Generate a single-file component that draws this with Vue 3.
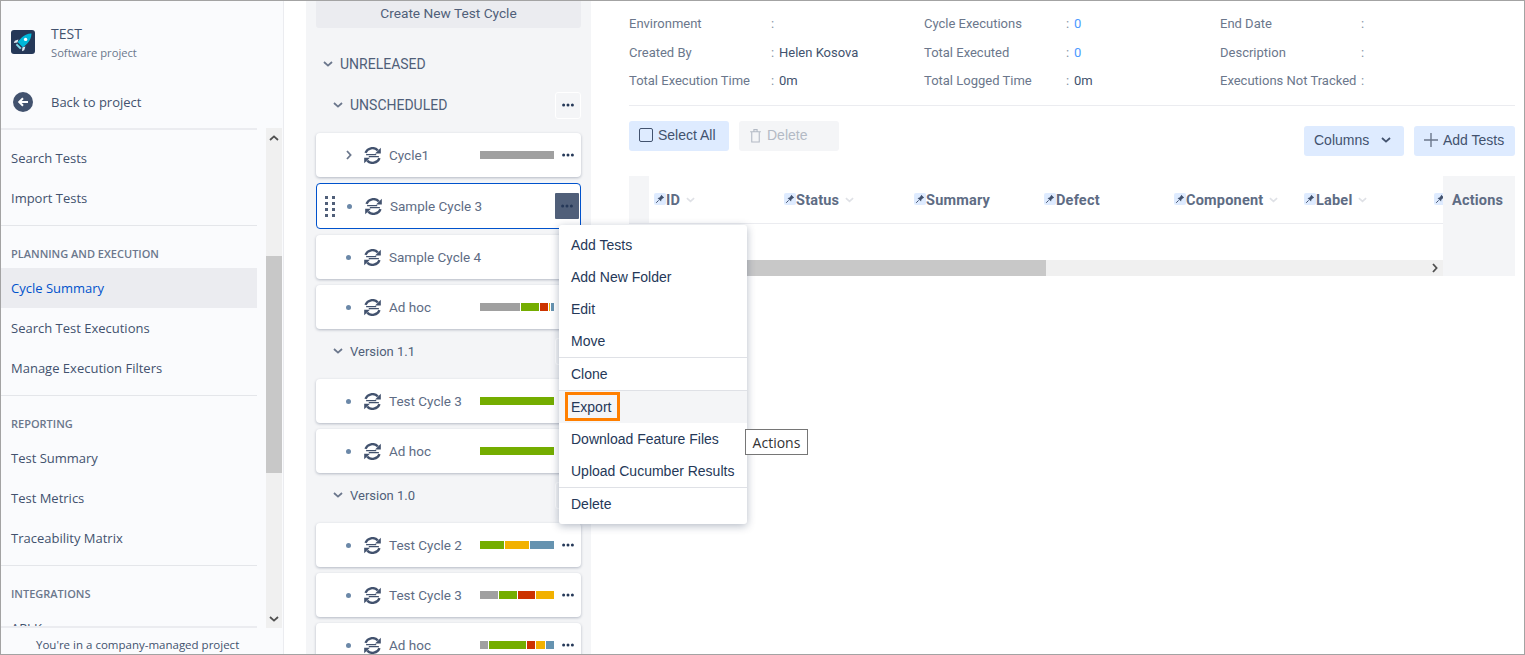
<script setup>
const gray = "#a0a0a0";
const green = "#74ad00";
const red = "#cc3300";
const amber = "#f2b100";
const blue = "#6693b0";

const navGroups = [
  { items: ["Search Tests", "Import Tests"] },
  {
    title: "PLANNING AND EXECUTION",
    items: ["Cycle Summary", "Search Test Executions", "Manage Execution Filters"],
  },
  { title: "REPORTING", items: ["Test Summary", "Test Metrics", "Traceability Matrix"] },
  { title: "INTEGRATIONS", items: ["API K"] },
];

const treeRows = [
  { type: "head", label: "UNSCHEDULED", caps: true },
  { type: "card", label: "Cycle1", expand: true, bar: [{ c: gray, w: 74 }] },
  { type: "card", label: "Sample Cycle 3", selected: true, bar: [] },
  { type: "card", label: "Sample Cycle 4", bar: [] },
  {
    type: "card",
    label: "Ad hoc",
    bar: [
      { c: gray, w: 40 },
      { c: green, w: 18 },
      { c: red, w: 8 },
      { c: amber, w: 1 },
      { c: blue, w: 3 },
    ],
  },
  { type: "head", label: "Version 1.1" },
  { type: "card", label: "Test Cycle 3", bar: [{ c: green, w: 74 }] },
  { type: "card", label: "Ad hoc", bar: [{ c: green, w: 74 }] },
  { type: "head", label: "Version 1.0" },
  {
    type: "card",
    label: "Test Cycle 2",
    bar: [
      { c: green, w: 24 },
      { c: amber, w: 24 },
      { c: blue, w: 24 },
    ],
  },
  {
    type: "card",
    label: "Test Cycle 3",
    bar: [
      { c: gray, w: 18 },
      { c: green, w: 18 },
      { c: red, w: 17 },
      { c: amber, w: 18 },
    ],
  },
  {
    type: "card",
    label: "Ad hoc",
    bar: [
      { c: gray, w: 8 },
      { c: green, w: 37 },
      { c: red, w: 8 },
      { c: amber, w: 9 },
      { c: blue, w: 8 },
    ],
  },
];

const info = [
  { label: "Environment", value: "" },
  { label: "Cycle Executions", value: "0", link: true },
  { label: "End Date", value: "" },
  { label: "Created By", value: "Helen Kosova" },
  { label: "Total Executed", value: "0", link: true },
  { label: "Description", value: "" },
  { label: "Total Execution Time", value: "0m" },
  { label: "Total Logged Time", value: "0m" },
  { label: "Executions Not Tracked", value: "" },
];

const columns = [
  { name: "ID", sort: true },
  { name: "Status", sort: true },
  { name: "Summary" },
  { name: "Defect" },
  { name: "Component", sort: true },
  { name: "Label", sort: true },
  { name: "" },
];

const menu = [
  { label: "Add Tests" },
  { label: "Add New Folder" },
  { label: "Edit" },
  { label: "Move", sep: true },
  { label: "Clone", sep: true },
  { label: "Export", active: true },
  { label: "Download Feature Files" },
  { label: "Upload Cucumber Results", sep: true },
  { label: "Delete" },
];
</script>

<template>
  <div class="page">
    <svg class="defs" width="0" height="0">
      <symbol id="sync" viewBox="0 0 16 16">
        <path d="M1.4 5.6A7 7 0 0 1 13 3.2" fill="none" stroke="currentColor" stroke-width="2.2" />
        <path d="M10.4 6h5.4V.8z" fill="currentColor" />
        <path d="M14.6 10.4A7 7 0 0 1 3 12.8" fill="none" stroke="currentColor" stroke-width="2.2" />
        <path d="M5.6 10H.2v5.2z" fill="currentColor" />
        <path d="M2 7.1h9.5M4.5 9.1H14" stroke="currentColor" stroke-width="1.2" />
      </symbol>
      <symbol id="more" viewBox="0 0 12 4">
        <circle cx="1.6" cy="2" r="1.5" fill="currentColor" />
        <circle cx="6" cy="2" r="1.5" fill="currentColor" />
        <circle cx="10.4" cy="2" r="1.5" fill="currentColor" />
      </symbol>
      <symbol id="chev" viewBox="0 0 10 6">
        <path d="M1 1l4 3.6L9 1" fill="none" stroke="currentColor" stroke-width="1.8" />
      </symbol>
      <symbol id="pin" viewBox="0 0 12 12">
        <path d="M7.2 1.8l3 3-1.3.4-1.6 1.6-.2 1.7-3.6-3.6 1.7-.2 1.6-1.6z" fill="#42526e" />
        <path d="M4.6 7.4L2.2 9.8" stroke="#42526e" stroke-width="1" />
      </symbol>
    </svg>

    <aside class="sidebar">
      <div class="side-head">
        <div class="project">
          <svg class="logo" viewBox="0 0 24 24">
            <rect width="24" height="24" rx="3" fill="#253858" />
            <path d="M20.5 3.5c-4.2.2-7.4 1.6-9.8 4L6.6 12l5.4 5.4 4.5-4.1c2.4-2.4 3.8-5.6 4-9.8z" fill="#00b8d9" />
            <path d="M7.4 9.6l-3.6 1.2-1 2.2 3.6-.4zM14.4 16.6l-1.2 3.6-2.2 1 .4-3.6z" fill="#dfe9f2" />
            <path d="M6 13.4l4.6 4.6-1.6 1.2-4.2-4.2z" fill="#7fdcec" />
            <circle cx="14.6" cy="9.4" r="1.7" fill="#fff" />
          </svg>
          <div>
            <div class="project-name">TEST</div>
            <div class="project-type">Software project</div>
          </div>
        </div>
        <div class="back">
          <svg class="back-icon" viewBox="0 0 20 20">
            <circle cx="10" cy="10" r="10" fill="#42526e" />
            <path d="M15 10H6.5M10 6.2L6.2 10l3.8 3.8" fill="none" stroke="#fff" stroke-width="2" />
          </svg>
          <span>Back to project</span>
        </div>
      </div>

      <div class="side-body">
        <div class="nav-col">
          <nav class="nav">
            <div v-for="(group, g) in navGroups" :key="g" class="nav-group">
              <div v-if="group.title" class="nav-title">{{ group.title }}</div>
              <div
                v-for="item in group.items"
                :key="item"
                class="nav-item"
                :class="{ current: item === 'Cycle Summary' }"
              >
                {{ item }}
              </div>
            </div>
          </nav>
        </div>
        <div class="scrollbar">
          <svg class="sb-arrow" viewBox="0 0 10 6"><path d="M1 5l4-3.6L9 5" fill="none" stroke="#505050" stroke-width="1.8" /></svg>
          <div class="sb-thumb"></div>
          <svg class="sb-arrow sb-down" viewBox="0 0 10 6"><path d="M1 1l4 3.6L9 1" fill="none" stroke="#505050" stroke-width="1.8" /></svg>
        </div>
      </div>
      <div class="side-foot">You're in a company-managed project</div>
    </aside>

    <section class="tree">
      <div class="create">Create New Test Cycle</div>
      <div class="release">
        <svg class="chev"><use href="#chev" /></svg>
        <span>UNRELEASED</span>
      </div>

      <template v-for="(row, i) in treeRows" :key="i">
        <div v-if="row.type === 'head'" class="version">
          <svg class="chev"><use href="#chev" /></svg>
          <span class="version-name" :class="{ caps: row.caps }">{{ row.label }}</span>
          <button class="version-more"><svg class="dots"><use href="#more" /></svg></button>
        </div>
        <div v-else class="card" :class="{ selected: row.selected }">
          <div v-if="row.selected" class="grip">
            <i v-for="n in 8" :key="n"></i>
          </div>
          <div class="slot">
            <svg v-if="row.expand" class="expand" viewBox="0 0 6 10">
              <path d="M1 1l3.6 4L1 9" fill="none" stroke="#6b778c" stroke-width="1.8" />
            </svg>
            <span v-else class="bullet"></span>
          </div>
          <svg class="sync"><use href="#sync" /></svg>
          <span class="card-name">{{ row.label }}</span>
          <div v-if="row.bar.length" class="bar">
            <span
              v-for="(seg, s) in row.bar"
              :key="s"
              :style="{ width: seg.w + 'px', background: seg.c }"
            ></span>
          </div>
          <button class="card-more"><svg class="dots"><use href="#more" /></svg></button>
        </div>
      </template>
    </section>

    <main class="main">
      <div class="info">
        <template v-for="cell in info" :key="cell.label">
          <span class="info-label">{{ cell.label }}</span>
          <span class="info-colon">:</span>
          <span class="info-value" :class="{ link: cell.link }">{{ cell.value }}</span>
        </template>
      </div>

      <div class="actions">
        <div class="actions-left">
          <button class="btn">
            <span class="check"></span>
            Select All
          </button>
          <button class="btn btn-off">
            <svg class="trash" viewBox="0 0 12 14">
              <path d="M1 3.5h10M4.5 3.5V1.5h3v2M2.5 3.5v9.5h7V3.5" fill="none" stroke="currentColor" stroke-width="1" />
            </svg>
            Delete
          </button>
        </div>
        <div class="actions-right">
          <button class="btn btn-columns">
            Columns
            <svg class="btn-chev"><use href="#chev" /></svg>
          </button>
          <button class="btn btn-add">
            <svg class="plus" viewBox="0 0 14 14"><path d="M7 0v14M0 7h14" stroke="#6b778c" stroke-width="1.4" /></svg>
            Add Tests
          </button>
        </div>
      </div>

      <div class="table">
        <div class="thead">
          <div class="gutter"></div>
          <div class="cols">
            <div v-for="(col, c) in columns" :key="c" class="col">
              <svg class="pin"><use href="#pin" /></svg>
              <span class="col-name">{{ col.name }}</span>
              <svg v-if="col.sort" class="col-chev"><use href="#chev" /></svg>
            </div>
          </div>
        </div>
        <div class="tbody"></div>
        <div class="hbar">
          <div class="hbar-thumb"></div>
          <svg class="hbar-arrow" viewBox="0 0 6 10">
            <path d="M1 1l3.6 4L1 9" fill="none" stroke="#505050" stroke-width="1.8" />
          </svg>
        </div>
        <div class="actions-col">Actions</div>
      </div>
    </main>

    <ul class="menu">
      <li
        v-for="item in menu"
        :key="item.label"
        :class="{ active: item.active, sep: item.sep }"
      >
        {{ item.label }}
      </li>
    </ul>
    <div class="highlight"></div>
    <div class="tooltip">Actions</div>
  </div>
</template>

<style>
html,
body {
  margin: 0;
  overflow: hidden;
  background: #fff;
}
</style>

<style scoped>
.page {
  position: relative;
  display: flex;
  box-sizing: border-box;
  width: 1525px;
  height: 655px;
  border: 1px solid #a3a3a3;
  overflow: hidden;
  background: #fff;
  color: #42526e;
}
.defs {
  position: absolute;
}
button {
  border: 0;
  padding: 0;
  background: none;
  color: inherit;
  font: inherit;
}

/* sidebar */
.sidebar {
  flex: none;
  display: flex;
  flex-direction: column;
  box-sizing: border-box;
  width: 283px;
  background: #fafbfd;
  border-right: 1px solid #ebecf0;
  font: 13px "Open Sans", sans-serif;
}
.side-head {
  height: 127px;
  padding-top: 23px;
  box-sizing: border-box;
}
.project {
  display: flex;
  align-items: center;
  gap: 16px;
  height: 38px;
  padding-left: 10px;
}
.logo {
  width: 24px;
  height: 24px;
  margin-top: -2px;
}
.project-name {
  font-size: 14px;
  line-height: 20px;
  color: #42526e;
}
.project-type {
  font-size: 11.2px;
  line-height: 18px;
  color: #6b778c;
}
.back {
  display: flex;
  align-items: center;
  height: 36px;
  margin-top: 22px;
  padding-left: 12px;
  gap: 18px;
}
.back-icon {
  width: 20px;
  height: 20px;
}
.side-body {
  display: flex;
  height: 500px;
}
.nav-col {
  width: 256px;
  box-sizing: border-box;
  border-top: 2px solid #ebecf0;
  border-bottom: 2px solid #ebecf0;
  overflow: hidden;
}
.nav {
  padding-top: 8px;
}
.nav-group {
  padding-bottom: 7px;
  border-bottom: 1px solid #e4e6ea;
}
.nav-title {
  padding: 20px 10px 6px;
  font-size: 11px;
  font-weight: 600;
  line-height: 16px;
  color: #6b778c;
}
.nav-item {
  height: 40px;
  padding-left: 10px;
  line-height: 40px;
  white-space: nowrap;
}
.nav-item.current {
  background: #ebecf0;
  color: #0052cc;
}
.scrollbar {
  position: relative;
  display: flex;
  flex-direction: column;
  width: 16px;
  margin-left: 9px;
  background: #f0f0f0;
}
.sb-arrow {
  position: absolute;
  left: 3px;
  top: 7px;
  width: 10px;
  height: 6px;
}
.sb-down {
  top: auto;
  bottom: 6px;
}
.sb-thumb {
  height: 217px;
  margin-top: 128px;
  background: #c8c8c8;
}
.side-foot {
  padding: 9px 0 0 35px;
  font-size: 11.5px;
  line-height: 16px;
  white-space: nowrap;
}

/* cycle tree */
.tree {
  flex: none;
  box-sizing: border-box;
  width: 285px;
  margin-left: 22px;
  padding: 0 10px;
  background: #f4f5f7;
  font: 13.5px Roboto, sans-serif;
  color: #505f79;
}
.create {
  height: 27px;
  line-height: 25px;
  text-align: center;
  background: #ebecf0;
  border-radius: 0 0 3px 3px;
  font-size: 13.7px;
}
.release {
  display: flex;
  align-items: center;
  gap: 7px;
  box-sizing: border-box;
  height: 41px;
  margin-top: 14px;
  padding: 2px 0 0 7px;
  font-size: 14px;
}
.chev {
  flex: none;
  width: 10px;
  height: 6px;
  color: #6b778c;
}
.version {
  display: flex;
  align-items: center;
  gap: 7px;
  height: 44px;
  padding-left: 17px;
}
.card + .version {
  margin-top: -6px;
}
.version-name {
  flex: 1;
  font-size: 13px;
}
.version-name.caps {
  font-size: 14px;
}
.version-more {
  display: flex;
  align-items: center;
  justify-content: center;
  box-sizing: border-box;
  width: 26px;
  height: 27px;
  border: 1px solid #fff;
  border-radius: 3px;
}
.dots {
  width: 12px;
  height: 4px;
  color: #253858;
}
.card {
  position: relative;
  display: flex;
  align-items: center;
  box-sizing: border-box;
  height: 44px;
  margin-bottom: 6px;
  padding-left: 24px;
  background: #fff;
  border-radius: 4px;
  box-shadow: 0 1px 3px rgba(9, 30, 66, 0.28);
}
.version + .card {
  margin-top: 6px;
}
.card.selected {
  height: 46px;
  border: 1px solid #0052cc;
  box-shadow: none;
}
.grip {
  position: absolute;
  left: 8px;
  top: 12px;
  display: grid;
  grid-template-columns: 3px 3px;
  column-gap: 4px;
  row-gap: 3px;
}
.grip i {
  width: 3px;
  height: 3px;
  background: #505f79;
}
.slot {
  flex: none;
  display: flex;
  align-items: center;
  justify-content: center;
  width: 16px;
}
.bullet {
  width: 5px;
  height: 5px;
  border-radius: 50%;
  background: #6b88a8;
}
.expand {
  width: 6px;
  height: 10px;
  margin-left: 2px;
}
.sync {
  flex: none;
  width: 17px;
  height: 17px;
  margin-left: 8px;
  color: #42526e;
}
.card-name {
  flex: 1;
  margin-left: 8px;
  white-space: nowrap;
  color: #5e6c84;
}
.bar {
  display: flex;
  gap: 1px;
  width: 74px;
  height: 8px;
}
.bar span {
  flex: none;
  height: 8px;
}
.card-more {
  flex: none;
  display: flex;
  align-items: center;
  justify-content: center;
  width: 27px;
  height: 26px;
}
.selected .card-more {
  width: 24px;
  margin-right: 1px;
  background: #505f79;
  border-radius: 1px;
}

/* details */
.main {
  flex: 1;
  min-width: 0;
  padding: 0 9px 0 38px;
  font: 13px Roboto, sans-serif;
}
.info {
  display: grid;
  grid-template-columns: 142px 8px 145px 142px 8px 146px 141px 8px 1fr;
  grid-template-rows: 29px 28px 29px;
  align-items: center;
  height: 96px;
  padding-top: 8px;
  box-sizing: content-box;
  border-bottom: 1px solid #ebecf0;
}
.info-label {
  color: #6b778c;
  white-space: nowrap;
}
.info-colon {
  color: #8993a4;
}
.info-value {
  color: #42526e;
}
.info-value.link {
  color: #4c9aff;
}
.actions {
  display: flex;
  justify-content: space-between;
  height: 35px;
  margin-top: 15px;
}
.actions-left {
  display: flex;
  gap: 10px;
  align-self: flex-start;
}
.actions-right {
  display: flex;
  gap: 10px;
  align-self: flex-end;
}
.btn {
  display: flex;
  align-items: center;
  box-sizing: border-box;
  width: 100px;
  height: 30px;
  padding: 0 0 2px 10px;
  background: #deebff;
  border-radius: 3px;
  font: 14px "Liberation Sans", Arial, sans-serif;
  color: #42526e;
}
.check {
  width: 12px;
  height: 12px;
  margin-right: 5px;
  border: 1px solid #42526e;
  border-radius: 2px;
}
.btn-off {
  background: #f4f5f7;
  color: #b3bac5;
}
.trash {
  width: 13px;
  height: 15px;
  margin-right: 5px;
}
.btn-columns {
  gap: 12px;
}
.btn-chev {
  width: 10px;
  height: 6px;
  color: #42526e;
}
.btn-add {
  width: 101px;
  gap: 5px;
}
.plus {
  width: 14px;
  height: 14px;
}

/* test table */
.table {
  position: relative;
  height: 100px;
  margin-top: 20px;
  overflow: hidden;
}
.thead {
  display: flex;
  height: 48px;
  box-sizing: border-box;
  border-bottom: 1px solid #ebecf0;
}
.gutter {
  flex: none;
  width: 20px;
  background: #f4f5f7;
}
.cols {
  display: flex;
  padding-left: 5px;
}
.col {
  flex: none;
  display: flex;
  align-items: center;
  width: 130px;
}
.pin {
  flex: none;
  width: 12px;
  height: 12px;
  margin-top: -2px;
  background: #deebff;
  border-radius: 2px;
}
.col-name {
  margin-top: 2px;
  font: 700 14.5px Roboto, sans-serif;
  letter-spacing: 0.2px;
  color: #5e6c84;
}
.col-chev {
  width: 9px;
  height: 6px;
  margin-left: 6px;
  color: #dfe1e6;
}
.tbody {
  height: 36px;
}
.hbar {
  position: relative;
  height: 16px;
  background: #f0f0f0;
}
.hbar-thumb {
  width: 417px;
  height: 16px;
  background: #c8c8c8;
}
.hbar-arrow {
  position: absolute;
  left: 803px;
  top: 3px;
  width: 6px;
  height: 10px;
}
.actions-col {
  position: absolute;
  top: 0;
  right: 0;
  bottom: 0;
  box-sizing: border-box;
  width: 72px;
  padding: 16px 0 0 9px;
  background: #f4f5f7;
  font: 700 14.5px Roboto, sans-serif;
  letter-spacing: 0.2px;
  line-height: 18px;
  color: #5e6c84;
}

/* actions menu */
.menu {
  position: absolute;
  left: 558px;
  top: 224px;
  box-sizing: border-box;
  width: 188px;
  margin: 0;
  padding: 4px 0;
  list-style: none;
  background: #fff;
  border-radius: 3px;
  box-shadow: 0 2px 8px rgba(9, 30, 66, 0.3);
  font: 14px "Liberation Sans", Arial, sans-serif;
  color: #253858;
}
.menu li {
  height: 32px;
  padding-left: 12px;
  line-height: 32px;
  white-space: nowrap;
}
.menu li.sep {
  box-sizing: content-box;
  border-bottom: 1px solid #dfe1e6;
}
.menu li.active {
  background: #f4f5f7;
}
.highlight {
  position: absolute;
  left: 564px;
  top: 391px;
  box-sizing: border-box;
  width: 55px;
  height: 29px;
  border: 3px solid #ff7f00;
}
.tooltip {
  position: absolute;
  left: 744px;
  top: 428px;
  box-sizing: border-box;
  width: 63px;
  height: 26px;
  border: 1px solid #767676;
  background: #fff;
  font: 14px/26px "Open Sans", sans-serif;
  text-align: center;
  color: #333;
}
</style>
